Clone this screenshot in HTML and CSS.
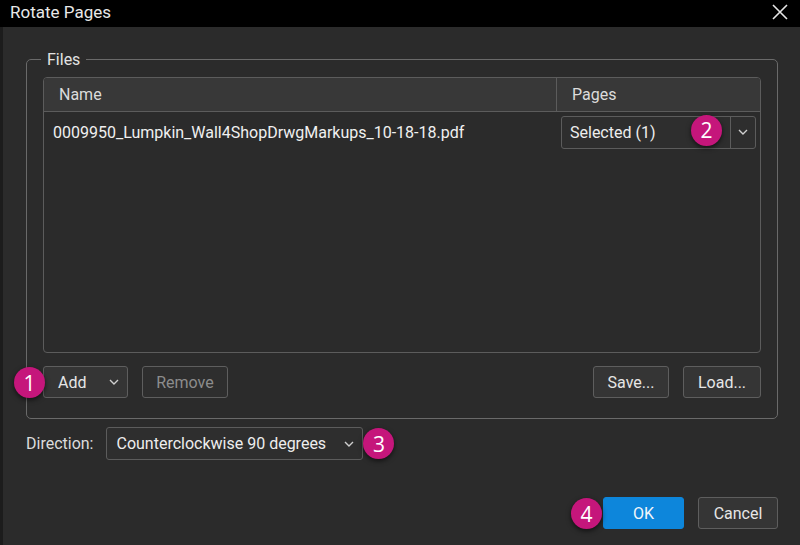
FILE: index.html
```html
<!DOCTYPE html>
<html>
<head>
<meta charset="utf-8">
<link rel="stylesheet" href="styles.css">
</head>
<body>
<div class="dialog">
  <div class="titlebar">
    <span class="title">Rotate Pages</span>
    <svg class="close" width="16" height="16" viewBox="0 0 16 16"><path d="M1 1L15 15M15 1L1 15" stroke="#e6e6e6" stroke-width="1.6" fill="none"/></svg>
  </div>
  <div class="body">
    <fieldset class="group">
      <legend>Files</legend>
      <div class="table">
        <div class="thead">
          <div class="col-name">Name</div>
          <div class="col-pages">Pages</div>
        </div>
        <div class="row">
          <div class="cell-name">0009950_Lumpkin_Wall4ShopDrwgMarkups_10-18-18.pdf</div>
          <div class="cell-pages">
            <div class="combo">
              <span class="combo-text">Selected (1)</span>
              <span class="combo-arrow"><svg width="10" height="6" viewBox="0 0 10 6"><path d="M1 1L5 5L9 1" stroke="#cfcfcf" stroke-width="1.4" fill="none"/></svg></span>
              <span class="badge b2">2</span>
            </div>
          </div>
        </div>
      </div>
      <div class="btnrow">
        <div class="left">
          <div class="btn add">Add <svg width="10" height="6" viewBox="0 0 10 6"><path d="M1 1L5 5L9 1" stroke="#cfcfcf" stroke-width="1.4" fill="none"/></svg><span class="badge b1">1</span></div>
          <div class="btn disabled">Remove</div>
        </div>
        <div class="right">
          <div class="btn save">Save...</div>
          <div class="btn load">Load...</div>
        </div>
      </div>
    </fieldset>
    <div class="direction">
      <span class="dlabel">Direction:</span>
      <div class="dselect">
        <span>Counterclockwise 90 degrees</span>
        <svg width="10" height="6" viewBox="0 0 10 6"><path d="M1 1L5 5L9 1" stroke="#cfcfcf" stroke-width="1.4" fill="none"/></svg>
        <span class="badge b3">3</span>
      </div>
    </div>
    <div class="footer">
      <div class="btn ok">OK<span class="badge b4">4</span></div>
      <div class="btn cancel">Cancel</div>
    </div>
  </div>
</div>
</body>
</html>
```
FILE: styles.css
```css
* { box-sizing: border-box; }
html, body { margin: 0; padding: 0; }
body {
  width: 800px;
  height: 545px;
  background: #2b2b2b;
  font-family: Roboto, "Liberation Sans", sans-serif;
  color: #e2e2e2;
  overflow: hidden;
}
.dialog { width: 800px; height: 545px; display: flex; flex-direction: column; }
.titlebar {
  height: 27px;
  background: #000;
  display: flex;
  align-items: center;
  justify-content: space-between;
  padding: 0 12px 3px 10px;
}
.title { font-size: 17px; color: #e8e8e8; }
.close { width: 16px; height: 16px; }
.body {
  flex: 1;
  border-left: 3px solid #1c1c1c;
  padding: 23px 22px 0 23px;
  display: flex;
  flex-direction: column;
}
.group {
  margin: 0;
  border: 1px solid #6a6a6a;
  border-radius: 5px;
  padding: 8px 16px 18px 16px;
  height: 369px;
  display: flex;
  flex-direction: column;
  min-width: 0;
}
.group legend {
  font-size: 16px;
  color: #e2e2e2;
  padding: 0 6px;
  margin-left: -2px;
}
.table {
  border: 1px solid #5c5c5c;
  border-radius: 4px;
  height: 276px;
  display: flex;
  flex-direction: column;
  overflow: hidden;
}
.thead {
  height: 34px;
  background: #383838;
  border-bottom: 1px solid #5c5c5c;
  display: flex;
  font-size: 16px;
  color: #dcdcdc;
}
.col-name { width: 513px; border-right: 1px solid #5c5c5c; padding: 7px 0 0 15px; }
.col-pages { flex: 1; padding: 7px 0 0 15px; }
.row { display: flex; align-items: center; height: 40px; }
.cell-name { width: 513px; padding-left: 9px; font-size: 16px; color: #f0f0f0; }
.cell-pages { flex: 1; padding-left: 4px; }
.combo {
  position: relative;
  width: 195px;
  height: 33px;
  border: 1px solid #5c5c5c;
  border-radius: 3px;
  background: #2e2e2e;
  display: flex;
  align-items: center;
}
.combo-text { flex: 1; padding-left: 8px; font-size: 16px; color: #ededed; }
.combo-arrow {
  width: 25px;
  height: 100%;
  border-left: 1px solid #5c5c5c;
  display: flex;
  align-items: center;
  justify-content: center;
}
.btnrow {
  margin-top: 13px;
  display: flex;
  justify-content: space-between;
}
.left, .right { display: flex; gap: 14px; }
.btn {
  position: relative;
  height: 32px;
  border: 1px solid #5e5e5e;
  border-radius: 3px;
  background: #353535;
  font-size: 16px;
  color: #e6e6e6;
  display: flex;
  align-items: center;
  justify-content: center;
}
.add { width: 85px; justify-content: space-between; padding: 0 8px 0 14px; }
.disabled { width: 86px; color: #8c8c8c; background: #2e2e2e; }
.save { width: 76px; }
.load { width: 78px; }
.direction {
  margin-top: 8px;
  display: flex;
  align-items: center;
  gap: 13px;
}
.dlabel { font-size: 16px; color: #dcdcdc; }
.dselect {
  position: relative;
  width: 257px;
  height: 33px;
  border: 1px solid #5c5c5c;
  border-radius: 3px;
  background: #2e2e2e;
  display: flex;
  align-items: center;
  justify-content: space-between;
  padding: 0 8px 0 9px;
  font-size: 16px;
  color: #ededed;
}
.footer {
  margin-top: 37px;
  display: flex;
  justify-content: flex-end;
  gap: 14px;
}
.ok {
  width: 81px;
  background: #0d86db;
  border-color: #0d86db;
  color: #f2f6fa;
}
.cancel { width: 80px; }
.badge {
  position: absolute;
  width: 31px;
  height: 31px;
  border-radius: 50%;
  background: #c5167b;
  color: #fff;
  font-size: 21px;
  display: flex;
  align-items: center;
  justify-content: center;
  box-shadow: 0 2px 5px rgba(0,0,0,0.6);
  font-family: "Open Sans", Roboto, sans-serif;
}
.b1 { left: -30px; top: 0px; }
.b2 { left: 129px; top: -2px; }
.b3 { right: -32px; top: 0px; }
.b4 { left: -33px; top: 0px; }
```
